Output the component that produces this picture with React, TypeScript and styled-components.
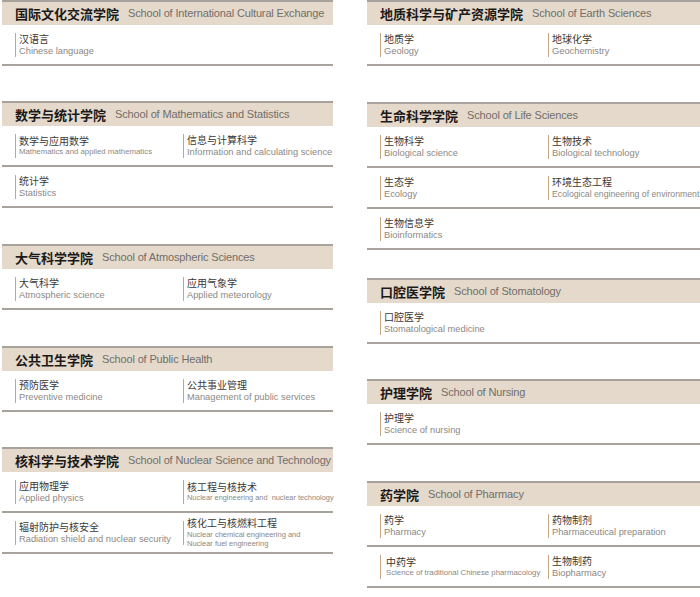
import React from "react";
import styled, { createGlobalStyle } from "styled-components";

const Global = createGlobalStyle`
  html, body { margin: 0; padding: 0; background: #ffffff; }
  body { width: 700px; height: 597px; overflow: hidden; }
`;

type Item = { cn: string; en: string; size?: number; indent?: boolean };
type School = { cn: string; en: string; space: number; rows: Item[][] };

const left: School[] = [
  {
    cn: "国际文化交流学院",
    en: "School of International Cultural Exchange",
    space: 0,
    rows: [[{ cn: "汉语言", en: "Chinese language" }]],
  },
  {
    cn: "数学与统计学院",
    en: "School of Mathematics and Statistics",
    space: 35,
    rows: [
      [
        { cn: "数学与应用数学", en: "Mathematics and applied mathematics", size: 7.8 },
        { cn: "信息与计算科学", en: "Information and calculating science" },
      ],
      [{ cn: "统计学", en: "Statistics" }],
    ],
  },
  {
    cn: "大气科学学院",
    en: "School of Atmospheric Sciences",
    space: 36,
    rows: [
      [
        { cn: "大气科学", en: "Atmospheric science" },
        { cn: "应用气象学", en: "Applied meteorology" },
      ],
    ],
  },
  {
    cn: "公共卫生学院",
    en: "School of Public Health",
    space: 36,
    rows: [
      [
        { cn: "预防医学", en: "Preventive medicine" },
        { cn: "公共事业管理", en: "Management of public services" },
      ],
    ],
  },
  {
    cn: "核科学与技术学院",
    en: "School of Nuclear Science and Technology",
    space: 35,
    rows: [
      [
        { cn: "应用物理学", en: "Applied physics" },
        { cn: "核工程与核技术", en: "Nuclear engineering and  nuclear technology", size: 7.4 },
      ],
      [
        { cn: "辐射防护与核安全", en: "Radiation shield and nuclear security" },
        { cn: "核化工与核燃料工程", en: "Nuclear chemical engineering and\nNuclear fuel engineering", size: 7.5 },
      ],
    ],
  },
];

const right: School[] = [
  {
    cn: "地质科学与矿产资源学院",
    en: "School of Earth Sciences",
    space: 0,
    rows: [
      [
        { cn: "地质学", en: "Geology" },
        { cn: "地球化学", en: "Geochemistry" },
      ],
    ],
  },
  {
    cn: "生命科学学院",
    en: "School of Life Sciences",
    space: 36,
    rows: [
      [
        { cn: "生物科学", en: "Biological science" },
        { cn: "生物技术", en: "Biological technology" },
      ],
      [
        { cn: "生态学", en: "Ecology" },
        { cn: "环境生态工程", en: "Ecological engineering of environment", size: 8.7 },
      ],
      [{ cn: "生物信息学", en: "Bioinformatics" }],
    ],
  },
  {
    cn: "口腔医学院",
    en: "School of Stomatology",
    space: 28,
    rows: [[{ cn: "口腔医学", en: "Stomatological medicine" }]],
  },
  {
    cn: "护理学院",
    en: "School of Nursing",
    space: 35,
    rows: [[{ cn: "护理学", en: "Science of nursing" }]],
  },
  {
    cn: "药学院",
    en: "School of Pharmacy",
    space: 36,
    rows: [
      [
        { cn: "药学", en: "Pharmacy" },
        { cn: "药物制剂", en: "Pharmaceutical preparation" },
      ],
      [
        { cn: "中药学", en: "Science of traditional Chinese pharmacology", size: 7.8, indent: true },
        { cn: "生物制药", en: "Biopharmacy" },
      ],
    ],
  },
];

const Page = styled.div`
  display: flex;
  gap: 34px;
  padding-left: 2px;
  width: 700px;
  box-sizing: border-box;
  overflow: hidden;
`;

const Column = styled.div<{ $w: number }>`
  display: flex;
  flex-direction: column;
  width: ${(p) => p.$w}px;
  flex: none;
`;

const Section = styled.section<{ $space: number }>`
  margin-top: ${(p) => p.$space}px;
  border-top: 2px solid #a8a29d;
`;

const Header = styled.div`
  height: 23px;
  background: #e4d9cb;
  display: flex;
  align-items: center;
  padding-left: 13px;
  white-space: nowrap;
`;

const HeaderCn = styled.span`
  font-family: "Noto Sans CJK SC", sans-serif;
  font-weight: 700;
  font-size: 13px;
  color: #1c1a19;
  line-height: 1;
`;

const HeaderEn = styled.span`
  font-family: "Liberation Sans", sans-serif;
  font-size: 11px;
  letter-spacing: -0.15px;
  color: #726e6a;
  margin-left: 9px;
  line-height: 1;
`;

const Row = styled.div`
  height: 39px;
  border-bottom: 2px solid #a8a29d;
  display: grid;
  grid-template-columns: 168px 168px;
  align-items: center;
  padding-left: 13px;
`;

const Cell = styled.div<{ $indent?: boolean }>`
  display: flex;
  flex-direction: column;
  justify-content: center;
  height: 24px;
  border-left: 1.5px solid #c5a783;
  padding-left: ${(p) => (p.$indent ? 5 : 3)}px;
  white-space: nowrap;
`;

const ItemCn = styled.div<{ $multi?: boolean }>`
  font-family: "Noto Sans CJK SC", sans-serif;
  font-size: 10px;
  line-height: 12px;
  color: #3b3836;
  margin-bottom: ${(p) => (p.$multi ? 2 : 0)}px;
`;

const ItemEn = styled.div<{ $size?: number; $multi?: boolean }>`
  font-family: "Liberation Sans", sans-serif;
  font-size: ${(p) => p.$size ?? 9.3}px;
  line-height: ${(p) => (p.$multi ? 8.5 : p.$size && p.$size < 8 ? 10 : 12)}px;
  color: #8c8884;
  white-space: pre;
`;

function SchoolBlock({ s }: { s: School }) {
  return (
    <Section $space={s.space}>
      <Header>
        <HeaderCn>{s.cn}</HeaderCn>
        <HeaderEn>{s.en}</HeaderEn>
      </Header>
      {s.rows.map((r, i) => (
        <Row key={i}>
          {r.map((it) => {
            const multi = it.en.includes("\n");
            return (
              <Cell key={it.cn} $indent={it.indent}>
                <ItemCn $multi={multi}>{it.cn}</ItemCn>
                <ItemEn $size={it.size} $multi={multi}>
                  {it.en}
                </ItemEn>
              </Cell>
            );
          })}
        </Row>
      ))}
    </Section>
  );
}

export default function App() {
  return (
    <>
      <Global />
      <Page>
        <Column $w={331}>
          {left.map((s) => (
            <SchoolBlock key={s.cn} s={s} />
          ))}
        </Column>
        <Column $w={333}>
          {right.map((s) => (
            <SchoolBlock key={s.cn} s={s} />
          ))}
        </Column>
      </Page>
    </>
  );
}
